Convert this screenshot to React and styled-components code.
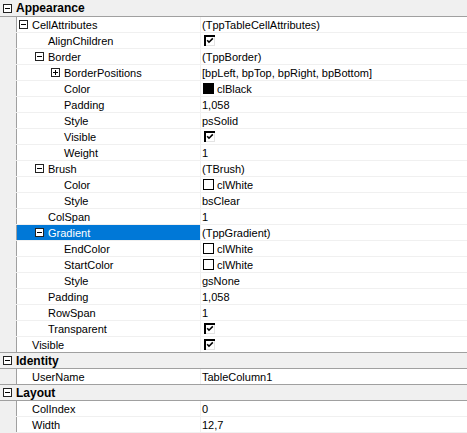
import React from "react"
import styled, { createGlobalStyle } from "styled-components"

const GlobalStyle = createGlobalStyle`
  html, body {
    margin: 0;
    padding: 0;
    background: #ffffff;
  }
  body {
    font-family: "Liberation Sans", Arial, sans-serif;
    font-size: 11px;
    color: #000000;
  }
`

const Inspector = styled.div`
  width: 467px;
  height: 433px;
  overflow: hidden;
  background: #ffffff;
  display: flex;
  flex-direction: column;
`

const GroupHeader = styled.div`
  height: ${(p) => (p.$first ? 16 : 15)}px;
  flex: none;
  display: flex;
  align-items: center;
  background: #f0f0f0;
  border-bottom: 1px solid #a0a0a0;
  font-weight: bold;
  font-size: 12px;
  gap: 4px;
  padding-left: 3px;
`

const Row = styled.div`
  height: 15px;
  flex: none;
  display: flex;
  border-bottom: 1px solid ${(p) => (p.$last ? "#a0a0a0" : "#f0f0f0")};
`

const Gutter = styled.div`
  width: 16px;
  flex: none;
  background: #f0f0f0;
  border-right: 1px solid #a0a0a0;
`

const NameCell = styled.div`
  width: ${(p) => 183 - (15 + 16 * (p.$level - 1))}px;
  flex: none;
  display: flex;
  align-items: center;
  padding-left: ${(p) => 15 + 16 * (p.$level - 1)}px;
  background: ${(p) => (p.$selected ? "#0078d7" : "transparent")};
  color: ${(p) => (p.$selected ? "#ffffff" : "#000000")};
  position: relative;
  white-space: nowrap;
`

const ExpanderSlot = styled.span`
  position: absolute;
  left: ${(p) => 2 + 16 * (p.$level - 1)}px;
  top: 3px;
  display: flex;
`

const ValueCell = styled.div`
  flex: 1;
  display: flex;
  align-items: center;
  gap: 3px;
  border-left: 1px solid #f0f0f0;
  padding-left: 1px;
  white-space: nowrap;
`

const Swatch = styled.span`
  width: 9px;
  height: 9px;
  margin-left: 1px;
  border: 1px solid #000000;
  background: ${(p) => p.$color};
  flex: none;
`

const CheckWrap = styled.span`
  display: flex;
  margin-left: 2px;
`

const Expander = ({ open }) => (
  <svg width="9" height="9" viewBox="0 0 9 9" style={{ display: "block" }}>
    <rect x="0.5" y="0.5" width="8" height="8" fill="#ffffff" stroke="#222222" />
    <line x1="2" y1="4.5" x2="7" y2="4.5" stroke="#000000" />
    {!open && <line x1="4.5" y1="2" x2="4.5" y2="7" stroke="#000000" />}
  </svg>
)

const Check = () => (
  <svg width="11" height="11" viewBox="0 0 11 11" style={{ display: "block" }}>
    <rect x="0" y="0" width="11" height="11" fill="#e3e3e3" />
    <rect x="0" y="0" width="11" height="2" fill="#000000" />
    <rect x="0" y="0" width="2" height="11" fill="#000000" />
    <rect x="2" y="2" width="8" height="8" fill="#ffffff" />
    <polyline points="3.2,5.2 5,7.2 8.8,3.4" fill="none" stroke="#000000" strokeWidth="1.6" />
  </svg>
)

const groups = [
  {
    title: "Appearance",
    rows: [
      { name: "CellAttributes", level: 1, exp: "open", value: "(TppTableCellAttributes)" },
      { name: "AlignChildren", level: 2, check: true },
      { name: "Border", level: 2, exp: "open", value: "(TppBorder)" },
      { name: "BorderPositions", level: 3, exp: "closed", value: "[bpLeft, bpTop, bpRight, bpBottom]" },
      { name: "Color", level: 3, swatch: "#000000", value: "clBlack" },
      { name: "Padding", level: 3, value: "1,058" },
      { name: "Style", level: 3, value: "psSolid" },
      { name: "Visible", level: 3, check: true },
      { name: "Weight", level: 3, value: "1" },
      { name: "Brush", level: 2, exp: "open", value: "(TBrush)" },
      { name: "Color", level: 3, swatch: "#ffffff", value: "clWhite" },
      { name: "Style", level: 3, value: "bsClear" },
      { name: "ColSpan", level: 2, value: "1" },
      { name: "Gradient", level: 2, exp: "open", value: "(TppGradient)", selected: true },
      { name: "EndColor", level: 3, swatch: "#ffffff", value: "clWhite" },
      { name: "StartColor", level: 3, swatch: "#ffffff", value: "clWhite" },
      { name: "Style", level: 3, value: "gsNone" },
      { name: "Padding", level: 2, value: "1,058" },
      { name: "RowSpan", level: 2, value: "1" },
      { name: "Transparent", level: 2, check: true },
      { name: "Visible", level: 1, check: true },
    ],
  },
  {
    title: "Identity",
    rows: [{ name: "UserName", level: 1, value: "TableColumn1" }],
  },
  {
    title: "Layout",
    rows: [
      { name: "ColIndex", level: 1, value: "0" },
      { name: "Width", level: 1, value: "12,7" },
    ],
  },
]

const PropertyRow = ({ row, last }) => (
  <Row $last={last}>
    <Gutter />
    <NameCell $level={row.level} $selected={row.selected}>
      {row.exp && (
        <ExpanderSlot $level={row.level}>
          <Expander open={row.exp === "open"} />
        </ExpanderSlot>
      )}
      {row.name}
    </NameCell>
    <ValueCell>
      {row.check && (
        <CheckWrap>
          <Check />
        </CheckWrap>
      )}
      {row.swatch && <Swatch $color={row.swatch} />}
      {row.value}
    </ValueCell>
  </Row>
)

const App = () => {
  return (
    <>
      <GlobalStyle />
      <Inspector>
        {groups.map((g, gi) => (
          <React.Fragment key={g.title}>
            <GroupHeader $first={gi === 0}>
              <Expander open />
              {g.title}
            </GroupHeader>
            {g.rows.map((r, i) => (
              <PropertyRow
                key={g.title + i}
                row={r}
                last={i === g.rows.length - 1 && gi < groups.length - 1}
              />
            ))}
          </React.Fragment>
        ))}
      </Inspector>
    </>
  )
}

export default App
